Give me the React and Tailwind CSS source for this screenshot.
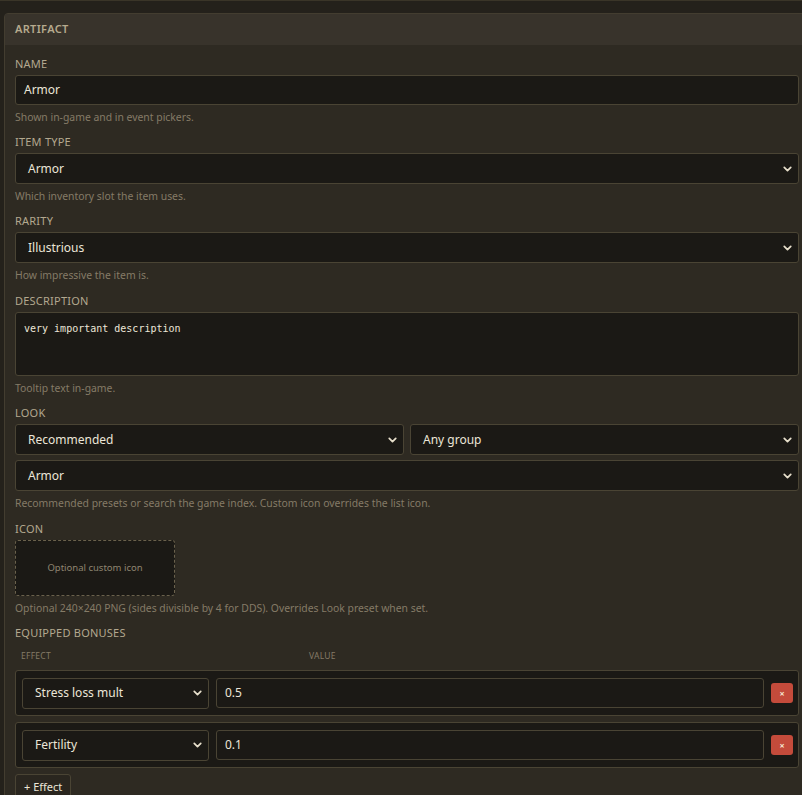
import { ChevronDown } from "lucide-react";

const font = { fontFamily: '"Noto Sans", "Open Sans", sans-serif' };

function Label({ children }) {
  return (
    <div className="text-[11px] leading-[14px] tracking-[0.02em] uppercase text-[#b3a88f] mb-[4px]">
      {children}
    </div>
  );
}

function Hint({ children }) {
  return (
    <div className="text-[10.4px] leading-[14px] text-[#857b67] mt-[5px]">{children}</div>
  );
}

function Select({ value, className = "" }) {
  return (
    <div
      className={
        "relative flex items-center h-[31px] rounded-[3px] border border-[#4a4434] bg-[#1b1915] pl-[12px] text-[12px] text-[#ece6d8] " +
        className
      }
    >
      <span>{value}</span>
      <ChevronDown
        size={13}
        strokeWidth={3.2}
        className="absolute right-[4px] top-1/2 -translate-y-1/2 text-[#e8e0cc]"
      />
    </div>
  );
}

function Field({ label, hint, children, className = "" }) {
  return (
    <div className={className}>
      <Label>{label}</Label>
      {children}
      {hint && <Hint>{hint}</Hint>}
    </div>
  );
}

function BonusRow({ effect, value }) {
  return (
    <div className="flex items-center gap-[7px] h-[46px] rounded-[3px] border border-[#4a4434] bg-[#1b1915] pl-[6px] pr-[5px]">
      <Select value={effect} className="w-[187px] pr-[20px]" />
      <div className="flex-1 h-[30px] flex items-center rounded-[3px] border border-[#4a4434] bg-[#1b1915] pl-[8px] text-[12px] text-[#ece6d8]">
        {value}
      </div>
      <button className="w-[22px] h-[20px] rounded-[3px] bg-[#c44b3b] flex items-center justify-center text-[#f4e6d0] text-[9px] font-bold leading-none">
        ×
      </button>
    </div>
  );
}

export default function App() {
  return (
    <div className="w-[802px] h-[795px] overflow-hidden bg-[#24211b]" style={font}>
      <div className="h-[13px] border-t border-[#3a3528]" />
      <div className="ml-[4px] w-[812px] rounded-tl-[4px] border border-[#433d30] bg-[#2e2a22]">
        <div className="h-[31px] flex items-center px-[10px] bg-[#38332b] text-[11px] font-semibold tracking-[0.03em] text-[#b6aa8e]">
          ARTIFACT
        </div>
        <div className="pl-[10px] pr-[16px] pt-[12px] flex flex-col gap-[11px]">
          <Field label="Name" hint="Shown in-game and in event pickers.">
            <div className="h-[30px] flex items-center rounded-[3px] border border-[#4a4434] bg-[#1b1915] pl-[8px] text-[12px] text-[#ece6d8]">
              Armor
            </div>
          </Field>
          <Field label="Item type" hint="Which inventory slot the item uses.">
            <Select value="Armor" />
          </Field>
          <Field label="Rarity" hint="How impressive the item is." className="mb-[1px]">
            <Select value="Illustrious" />
          </Field>
          <Field label="Description" hint="Tooltip text in-game.">
            <div
              className="h-[64px] rounded-[3px] border border-[#4a4434] bg-[#1b1915] pl-[8px] pt-[8px] text-[10px] text-[#ece6d8]"
              style={{ fontFamily: '"DejaVu Sans Mono", "Liberation Mono", monospace' }}
            >
              very important description
            </div>
          </Field>
          <Field
            label="Look"
            hint="Recommended presets or search the game index. Custom icon overrides the list icon."
            className="mb-[1px]"
          >
            <div className="flex gap-[6px]">
              <Select value="Recommended" className="flex-1" />
              <Select value="Any group" className="flex-1" />
            </div>
            <Select value="Armor" className="mt-[5px]" />
          </Field>
          <Field
            label="Icon"
            hint="Optional 240×240 PNG (sides divisible by 4 for DDS). Overrides Look preset when set."
          >
            <div className="w-[160px] h-[56px] flex items-center justify-center rounded-[3px] border border-dashed border-[#6a614c] bg-[#1b1915] text-[9.5px] text-[#8f8571]">
              Optional custom icon
            </div>
          </Field>
          <div>
            <Label>Equipped bonuses</Label>
            <div className="flex text-[8.5px] tracking-[0.03em] text-[#857b67] pl-[6px] h-[16px] items-center mt-[8px] mb-[6px]">
              <span className="w-[288px]">EFFECT</span>
              <span>VALUE</span>
            </div>
            <div className="flex flex-col gap-[6px]">
              <BonusRow effect="Stress loss mult" value="0.5" />
              <BonusRow effect="Fertility" value="0.1" />
            </div>
            <button className="mt-[6px] h-[26px] px-[8px] rounded-[3px] border border-[#4a4434] bg-[#2a261f] text-[11px] text-[#ece6d8]">
              + Effect
            </button>
          </div>
        </div>
      </div>
    </div>
  );
}
